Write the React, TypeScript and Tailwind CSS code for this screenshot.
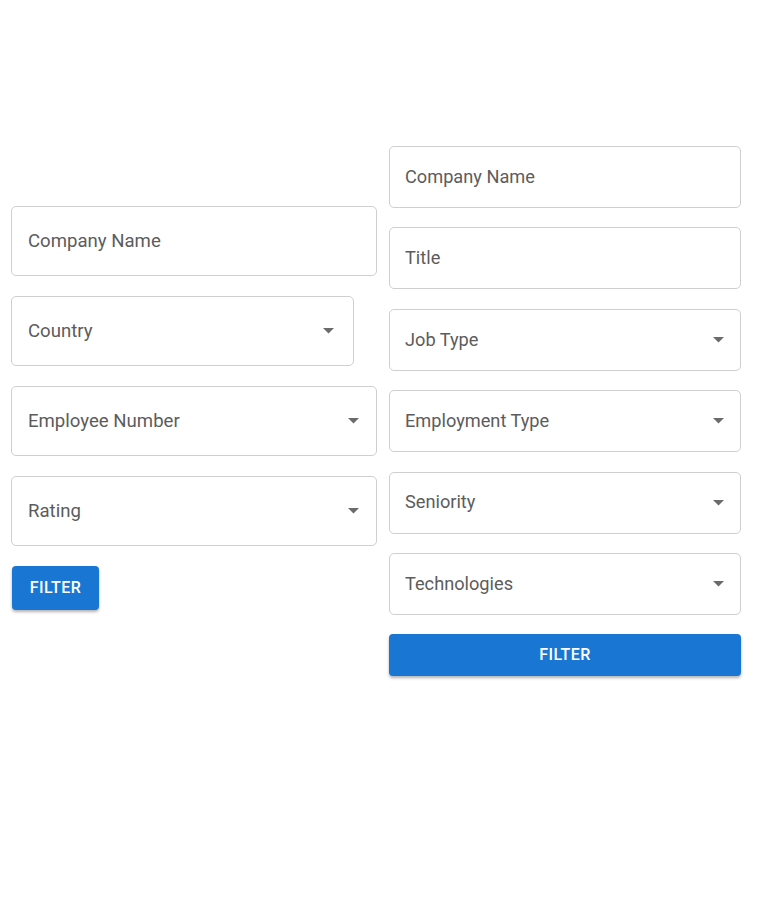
import React from 'react';

function Arrow() {
  return (
    <svg width="11" height="6" viewBox="0 0 11 6" className="shrink-0">
      <polygon points="0,0 11,0 5.5,5.5" fill="#6b6b6b" />
    </svg>
  );
}

interface FieldProps {
  label: string;
  select?: boolean;
  className?: string;
}

function Field({ label, select, className }: FieldProps) {
  return (
    <div
      className={`flex items-center justify-between border border-[#cfcfcf] rounded-[5px] bg-white ${className ?? ''}`}
    >
      <span className="text-[#5c5c5c] leading-none">{label}</span>
      {select && <Arrow />}
    </div>
  );
}

export default function App() {
  return (
    <div
      className="min-h-[900px] bg-white flex items-start pt-[146px] pl-[11px] gap-[12px]"
      style={{ fontFamily: 'Roboto, "Liberation Sans", sans-serif' }}
    >
      {/* company filter */}
      <div className="w-[366px] mt-[60px] flex flex-col gap-5 text-[18.6px]">
        <Field label="Company Name" className="h-[70px] pl-4" />
        <Field label="Country" select className="h-[70px] w-[343px] pl-4 pr-[19px]" />
        <Field label="Employee Number" select className="h-[70px] pl-4 pr-[17px]" />
        <Field label="Rating" select className="h-[70px] pl-4 pr-[17px]" />
        <button className="self-start ml-px h-[44px] w-[87px] rounded-[4px] bg-[#1976d2] text-white text-[16px] font-medium tracking-[0.4px] shadow-[0_2px_3px_rgba(0,0,0,0.3)]">
          FILTER
        </button>
      </div>

      {/* job filter */}
      <div className="w-[352px] flex flex-col gap-[19.4px] text-[18.2px]">
        <Field label="Company Name" className="h-[62px] pl-[15px]" />
        <Field label="Title" className="h-[62px] pl-[15px]" />
        <Field label="Job Type" select className="h-[62px] pl-[15px] pr-4" />
        <Field label="Employment Type" select className="h-[62px] pl-[15px] pr-4" />
        <Field label="Seniority" select className="h-[62px] pl-[15px] pr-4" />
        <Field label="Technologies" select className="h-[62px] pl-[15px] pr-4" />
        <button className="h-[42px] w-full rounded-[4px] bg-[#1976d2] text-white text-[16px] font-medium tracking-[0.4px] shadow-[0_2px_3px_rgba(0,0,0,0.3)]">
          FILTER
        </button>
      </div>
    </div>
  );
}
